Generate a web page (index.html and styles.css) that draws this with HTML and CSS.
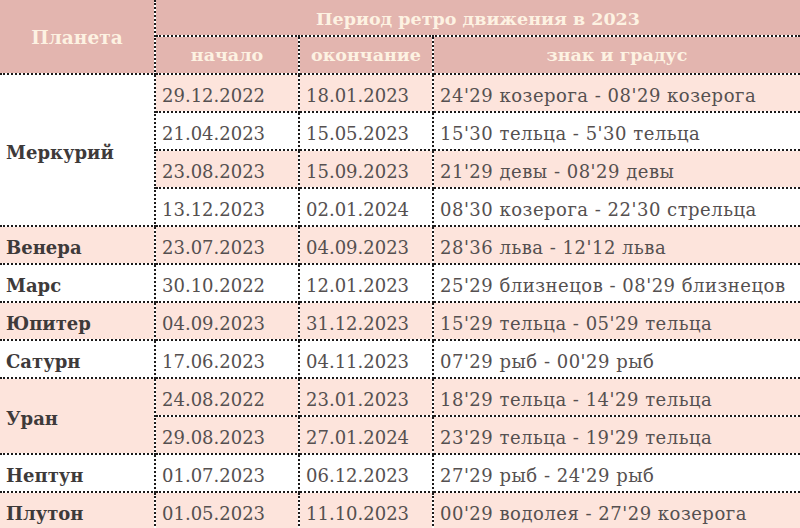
FILE: index.html
```html
<!DOCTYPE html>
<html lang="ru">
<head>
<meta charset="utf-8">
<title>Ретроградные планеты 2023</title>
<link rel="stylesheet" href="styles.css">
</head>
<body>
<table class="retro">
  <colgroup>
    <col class="c-planet">
    <col class="c-start">
    <col class="c-end">
    <col class="c-sign">
  </colgroup>
  <thead>
    <tr class="h1">
      <th rowspan="2" class="planet-h">Планета</th>
      <th colspan="3">Период ретро движения в 2023</th>
    </tr>
    <tr class="h2">
      <th>начало</th>
      <th>окончание</th>
      <th>знак и градус</th>
    </tr>
  </thead>
  <tbody>
    <tr>
      <td rowspan="4" class="planet white">Меркурий</td>
      <td class="pink">29.12.2022</td><td class="pink">18.01.2023</td><td class="pink sign">24'29 козерога - 08'29 козерога</td>
    </tr>
    <tr><td>21.04.2023</td><td>15.05.2023</td><td class="sign">15'30 тельца - 5'30 тельца</td></tr>
    <tr><td class="pink">23.08.2023</td><td class="pink">15.09.2023</td><td class="pink sign">21'29 девы - 08'29 девы</td></tr>
    <tr><td>13.12.2023</td><td>02.01.2024</td><td class="sign">08'30 козерога - 22'30 стрельца</td></tr>
    <tr class="pink"><td class="planet">Венера</td><td>23.07.2023</td><td>04.09.2023</td><td class="sign">28'36 льва - 12'12 льва</td></tr>
    <tr><td class="planet">Марс</td><td>30.10.2022</td><td>12.01.2023</td><td class="sign">25'29 близнецов - 08'29 близнецов</td></tr>
    <tr class="pink"><td class="planet">Юпитер</td><td>04.09.2023</td><td>31.12.2023</td><td class="sign">15'29 тельца - 05'29 тельца</td></tr>
    <tr><td class="planet">Сатурн</td><td>17.06.2023</td><td>04.11.2023</td><td class="sign">07'29 рыб - 00'29 рыб</td></tr>
    <tr class="pink"><td rowspan="2" class="planet">Уран</td><td>24.08.2022</td><td>23.01.2023</td><td class="sign">18'29 тельца - 14'29 тельца</td></tr>
    <tr class="pink"><td>29.08.2023</td><td>27.01.2024</td><td class="sign">23'29 тельца - 19'29 тельца</td></tr>
    <tr><td class="planet">Нептун</td><td>01.07.2023</td><td>06.12.2023</td><td class="sign">27'29 рыб - 24'29 рыб</td></tr>
    <tr class="pink"><td class="planet">Плутон</td><td>01.05.2023</td><td>11.10.2023</td><td class="sign">00'29 водолея - 27'29 козерога</td></tr>
  </tbody>
</table>
</body>
</html>
```

FILE: styles.css
```css
html, body {
  margin: 0;
  padding: 0;
  background: #ffffff;
}

.retro {
  width: 800px;
  border-collapse: collapse;
  border-style: hidden;
  table-layout: fixed;
  font-family: "DejaVu Serif", "Liberation Serif", serif;
  font-size: 18px;
  color: #555050;
}

.c-planet { width: 155px; }
.c-start { width: 144px; }
.c-end { width: 134px; }
.c-sign { width: 367px; }

.retro th,
.retro td {
  border: 2px dotted #1c1a1a;
  padding: 0 6px;
  white-space: nowrap;
  overflow: hidden;
}

.retro th {
  background: #e3b5af;
  color: #fdf2e2;
  font-weight: bold;
  text-align: center;
  font-size: 17.5px;
}

.retro th.planet-h { font-size: 18.5px; }

.h1 { height: 36px; }
.h2 { height: 38px; }
.h1 th { padding-top: 2px; }

.retro tbody tr { height: 38px; }

.retro td {
  padding-top: 4px;
  vertical-align: middle;
}

.retro td.sign { letter-spacing: 0.5px; }

.pink, .pink td { background: #fde4dc; }
.white { background: #ffffff; }

.planet {
  font-weight: bold;
  color: #3e3a3a;
  padding-left: 5px;
}
```
